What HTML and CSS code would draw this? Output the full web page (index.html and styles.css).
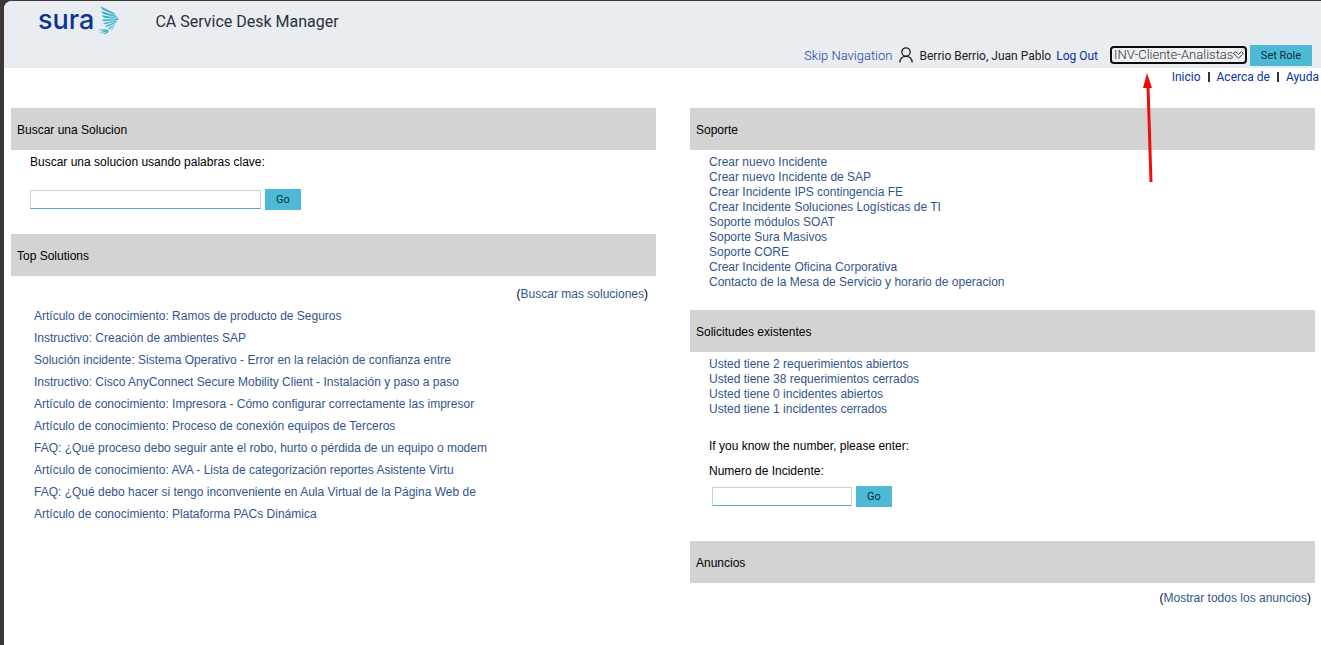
FILE: index.html
```html
<!DOCTYPE html>
<html lang="es">
<head>
<meta charset="utf-8">
<title>CA Service Desk Manager</title>
<link rel="stylesheet" href="styles.css">
</head>
<body>
<div class="page">
  <header class="header">
    <div class="brand">
      <div class="logo">
        <span class="logo-text">sura</span>
        <svg class="logo-mark" width="24" height="30" viewBox="0 0 24 30" fill="#35b5c7" aria-hidden="true">
          <path d="M3 1 L17 8 L19 10.4 L6 5 Z"/>
          <path d="M4 6 L19.5 11 L20.5 12.6 L6.5 9.2 Z"/>
          <path d="M4.5 10.2 L21.5 13 L21.5 13.8 L7 12.8 Z"/>
          <path d="M5 14.6 L21.5 14 L21 14.9 L6.5 16.2 Z"/>
          <path d="M6 18 L20.5 15.2 L19.8 16.2 L8 19.3 Z"/>
          <path d="M8 21 L19.5 16.6 L18.8 17.8 L10 22 Z"/>
          <path d="M11 23.6 L18.5 18.4 L17.5 20 L12.6 24.2 Z"/>
          <path d="M13.6 25.6 L17.3 20.8 L15.8 24 Z"/>
          <path d="M0 25.4 Q6 23.2 11.5 25 Q12.5 27.6 8 29 L5 28.6 Q9 28 9.8 26.6 Q5 28 2 27.2 Q6 26.6 7.5 25.6 Q3.5 25.2 0 25.4 Z"/>
        </svg>
      </div>
      <h1 class="title">CA Service Desk Manager</h1>
    </div>
    <form class="userbar">
      <a class="skip" href="#main">Skip Navigation</a>
      <svg class="user-icon" width="14" height="16" viewBox="0 0 14 16" fill="none" stroke="#222" stroke-width="1.3" aria-hidden="true">
        <circle cx="7" cy="5" r="4.2"/>
        <path d="M.8 15.5 C1 11.5 3.5 9.3 7 9.3 S13 11.5 13.2 15.5"/>
      </svg>
      <span class="user">Berrio Berrio, Juan Pablo</span>
      <a class="strong-link" href="#">Log Out</a>
      <span class="role-box">
        <select class="role" aria-label="Role"><option>INV-Cliente-Analistas</option></select>
        <svg class="chevron" width="11" height="8" viewBox="0 0 11 8" fill="#fff" stroke="#333" stroke-width="1" aria-hidden="true"><path d="M.7 2.5 L2.5 .7 L5.5 3.5 L8.5 .7 L10.3 2.5 L5.5 7.2 Z"/></svg>
      </span>
      <button class="btn btn-role" type="button">Set Role</button>
    </form>
  </header>
  <nav class="menu">
    <a class="strong-link" href="#">Inicio</a><span class="bar"></span>
    <a class="strong-link" href="#">Acerca de</a><span class="bar"></span>
    <a class="strong-link" href="#">Ayuda</a>
  </nav>
  <main class="columns" id="main">
    <div>
      <section>
        <h2 class="heading">Buscar una Solucion</h2>
        <form class="block search">
          <label for="keywords">Buscar una solucion usando palabras clave:</label>
          <div class="field"><input class="input input-wide" id="keywords" type="text"><button class="btn" type="button">Go</button></div>
        </form>
      </section>
      <section>
        <h2 class="heading">Top Solutions</h2>
        <p class="more more-top">(<a href="#">Buscar mas soluciones</a>)</p>
        <ul class="list solutions">
          <li><a href="#">Artículo de conocimiento: Ramos de producto de Seguros</a></li>
          <li><a href="#">Instructivo: Creación de ambientes SAP</a></li>
          <li><a href="#">Solución incidente: Sistema Operativo - Error en la relación de confianza entre</a></li>
          <li><a href="#">Instructivo: Cisco AnyConnect Secure Mobility Client - Instalación y paso a paso</a></li>
          <li><a href="#">Artículo de conocimiento: Impresora - Cómo configurar correctamente las impresor</a></li>
          <li><a href="#">Artículo de conocimiento: Proceso de conexión equipos de Terceros</a></li>
          <li><a href="#">FAQ: ¿Qué proceso debo seguir ante el robo, hurto o pérdida de un equipo o modem</a></li>
          <li><a href="#">Artículo de conocimiento: AVA - Lista de categorización reportes Asistente Virtu</a></li>
          <li><a href="#">FAQ: ¿Qué debo hacer si tengo inconveniente en Aula Virtual de la Página Web de</a></li>
          <li><a href="#">Artículo de conocimiento: Plataforma PACs Dinámica</a></li>
        </ul>
      </section>
    </div>
    <div>
      <section>
        <h2 class="heading">Soporte</h2>
        <ul class="list block support">
          <li><a href="#">Crear nuevo Incidente</a></li>
          <li><a href="#">Crear nuevo Incidente de SAP</a></li>
          <li><a href="#">Crear Incidente IPS contingencia FE</a></li>
          <li><a href="#">Crear Incidente Soluciones Logísticas de TI</a></li>
          <li><a href="#">Soporte módulos SOAT</a></li>
          <li><a href="#">Soporte Sura Masivos</a></li>
          <li><a href="#">Soporte CORE</a></li>
          <li><a href="#">Crear Incidente Oficina Corporativa</a></li>
          <li><a href="#">Contacto de la Mesa de Servicio y horario de operacion</a></li>
        </ul>
      </section>
      <section>
        <h2 class="heading">Solicitudes existentes</h2>
        <ul class="list block">
          <li><a href="#">Usted tiene 2 requerimientos abiertos</a></li>
          <li><a href="#">Usted tiene 38 requerimientos cerrados</a></li>
          <li><a href="#">Usted tiene 0 incidentes abiertos</a></li>
          <li><a href="#">Usted tiene 1 incidentes cerrados</a></li>
        </ul>
        <form class="block lookup">
          <p class="hint">If you know the number, please enter:</p>
          <label for="incident">Numero de Incidente:</label>
          <div class="field field-inset"><input class="input" id="incident" type="text"><button class="btn" type="button">Go</button></div>
        </form>
      </section>
      <section>
        <h2 class="heading">Anuncios</h2>
        <p class="more more-news">(<a href="#">Mostrar todos los anuncios</a>)</p>
      </section>
    </div>
  </main>
  <svg class="pointer" width="16" height="112" viewBox="0 0 16 112" aria-hidden="true">
    <path d="M6 14 L9 110" stroke="#f50a0a" stroke-width="3"/>
    <path d="M5 1 L10 16 L1 16 Z" fill="#f50a0a"/>
  </svg>
</div>
</body>
</html>
```

FILE: styles.css
```css
* { box-sizing: border-box; }

body {
  margin: 0;
  padding: 1px 0 0 4px;
  min-height: 100vh;
  display: flex;
  background: #3a3736;
  color: #000;
  font: 12px/15px Roboto, "Liberation Sans", sans-serif;
}

.page {
  position: relative;
  flex: 1;
  background: #fff;
  border-top-left-radius: 8px;
}

a { color: #34548c; text-decoration: none; }
h1, h2, p, ul { margin: 0; padding: 0; font-weight: 400; }

.header {
  background: #e9ecf1;
  border-top-left-radius: 8px;
  padding: 0 9px 1px 34px;
}
.brand { display: flex; align-items: center; height: 42px; gap: 34px; }
.logo { display: flex; align-items: center; gap: 3px; }
.logo-text { font-family: Inter, sans-serif; font-size: 27px; line-height: 32px; font-weight: 500; color: #0b3595; padding-bottom: 4px; }
.logo-mark { margin-bottom: 4px; }
.title { font-size: 16px; line-height: 24px; color: #26323b; }

.userbar { display: flex; align-items: center; justify-content: flex-end; height: 24px; }
.skip { color: #1d41a0; font-size: 13px; font-weight: 300; }
.user-icon { margin: 0 6px 0 7px; }
.user { color: #222; padding-top: 2px; }
.strong-link { color: #0a32a0; padding-top: 2px; }
.user + .strong-link { margin: 0 12px 0 5px; }
.role-box { position: relative; display: flex; }
.role {
  appearance: none;
  width: 137px;
  height: 18px;
  border: 2px solid #0c0c0c;
  border-radius: 4px;
  padding: 0 0 0 2px;
  background: #edf0f4;
  color: #333;
  font: 300 13px/14px Roboto, sans-serif;
}
.chevron { position: absolute; right: 3px; top: 5px; pointer-events: none; }

.btn {
  width: 36px;
  height: 21px;
  border: 0;
  padding: 1px 0 0;
  background: #4eb9d5;
  color: #08303c;
  font: 11px/20px Roboto, sans-serif;
}
.btn-role { width: 62px; margin-left: 3px; }

.menu { display: flex; align-items: center; justify-content: flex-end; gap: 7px; height: 17px; padding-right: 2px; }
.bar { width: 2px; height: 10px; background: #333; }

.columns {
  display: grid;
  grid-template-columns: 645fr 625fr;
  gap: 34px;
  padding: 23px 6px 0 7px;
  font-family: "Liberation Sans", Arial, sans-serif;
}
.heading { background: #d3d3d3; padding: 15px 6px 12px; font-size: 12px; line-height: 15px; }
.block { padding: 5px 19px 0; }
.search { padding-bottom: 24px; }
.field { display: flex; align-items: center; gap: 4px; }
.search .field { margin-top: 19px; }
.input {
  width: 140px;
  height: 19px;
  border: 1px solid #c6d2d6;
  border-bottom-color: #58abc4;
  padding: 0 4px;
  background: #fff;
  font: 12px/15px Roboto, sans-serif;
}
.input-wide { width: 231px; }

.more { text-align: right; }
.more-top { padding: 11px 8px 0 0; }
.more-news { padding: 8px 4px 0 0; }

.list { list-style: none; }
.solutions { padding: 3px 23px 0; line-height: 22px; }
.support { padding-bottom: 20px; }
.lookup { padding-top: 22px; padding-bottom: 34px; }
.hint { margin-bottom: 10px; }
.field-inset { margin-top: 7px; padding-left: 3px; }

.pointer { position: absolute; right: 163px; top: 71px; }
```
